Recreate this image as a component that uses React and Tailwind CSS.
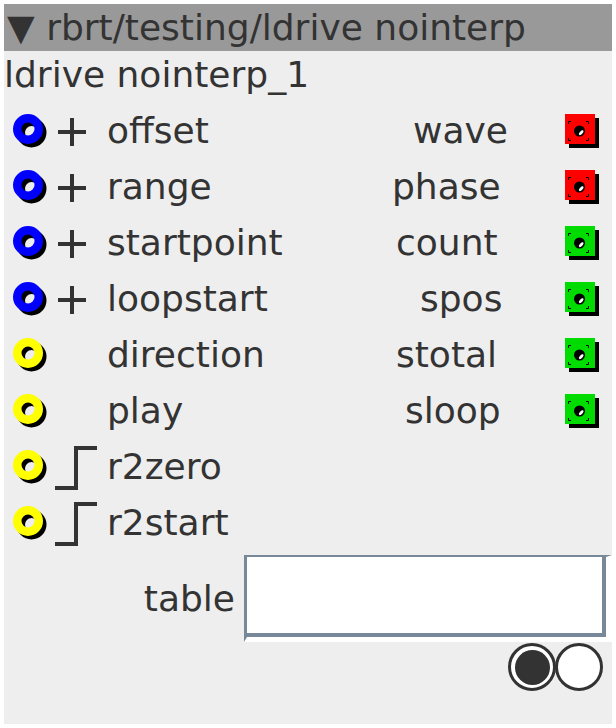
import React from "react";

const GREEN = "#00dc00";
const RED = "#ff0000";
const BLUE = "#0000ff";
const YELLOW = "#ffff00";

function Ring({ color }) {
  return (
    <svg width="36" height="36" viewBox="0 0 36 36" className="shrink-0 mt-[4px]">
      <circle cx="18.5" cy="18.5" r="10.75" fill="none" stroke="#000" strokeWidth="8.5" />
      <circle cx="15" cy="15" r="10.75" fill="none" stroke={color} strokeWidth="8.5" />
    </svg>
  );
}

function Slot({ kind }) {
  return (
    <svg width="44" height="48" viewBox="0 0 44 48" className="shrink-0 mt-[4px]">
      {kind === "plus" && (
        <g stroke="#333" strokeWidth="4">
          <line x1="4" y1="24" x2="32" y2="24" />
          <line x1="18" y1="10" x2="18" y2="38" />
        </g>
      )}
      {kind === "step" && (
        <polyline
          points="1,44 22,44 22,4 43,4"
          fill="none"
          stroke="#333"
          strokeWidth="4"
          strokeLinejoin="miter"
        />
      )}
    </svg>
  );
}

function Square({ color }) {
  return (
    <svg width="34" height="34" viewBox="0 0 34 34" className="shrink-0 mt-[2px]">
      <rect x="4" y="4" width="30" height="30" fill="#000" />
      <rect x="0" y="0" width="30" height="30" fill={color} />
      <g stroke="#000" strokeWidth="1" fill="none">
        <polyline points="3.5,10 3.5,7.5 6,7.5" />
        <polyline points="21,7.5 23.5,7.5 23.5,10" />
        <polyline points="3.5,24 3.5,26.5 6,26.5" />
        <polyline points="21,26.5 23.5,26.5 23.5,24" />
      </g>
      <circle cx="14.5" cy="17" r="5.5" fill="#000" />
      <ellipse cx="16.2" cy="18.7" rx="3" ry="1.5" fill="#fff" transform="rotate(-45 16.2 18.7)" />
    </svg>
  );
}

const rows = [
  { c: BLUE, kind: "plus", label: "offset", r: "wave", rc: RED, ml: "ml-[21px]" },
  { c: BLUE, kind: "plus", label: "range", r: "phase", rc: RED, ml: "ml-[0px]" },
  { c: BLUE, kind: "plus", label: "startpoint", r: "count", rc: GREEN, ml: "ml-[4px]" },
  { c: BLUE, kind: "plus", label: "loopstart", r: "spos", rc: GREEN, ml: "ml-[28px]" },
  { c: YELLOW, kind: "none", label: "direction", r: "stotal", rc: GREEN, ml: "ml-[4px]" },
  { c: YELLOW, kind: "none", label: "play", r: "sloop", rc: GREEN, ml: "ml-[13px]" },
  { c: YELLOW, kind: "step", label: "r2zero" },
  { c: YELLOW, kind: "step", label: "r2start" },
];

export default function App() {
  return (
    <div
      className="w-[616px] h-[728px] bg-white p-[4px] text-[#333] text-[36px] leading-[normal]"
      style={{ fontFamily: '"DejaVu Sans", sans-serif' }}
    >
      <div className="w-[608px] h-[720px] bg-[#eeeeee] flex flex-col">
        <div className="h-[47px] bg-[#999999] flex items-center pl-[3px] whitespace-nowrap">
          ▼ rbrt/testing/ldrive nointerp
        </div>
        <div className="mt-[3px] pl-[0px] whitespace-nowrap">ldrive nointerp_1</div>
        <div className="mt-[7px] flex flex-col">
          {rows.map((row) => (
            <div key={row.label} className="h-[56px] flex items-center whitespace-nowrap">
              <div className="w-[388px] shrink-0 flex items-center pl-[9px]">
                <Ring color={row.c} />
                <div className="ml-[5px]">
                  <Slot kind={row.kind} />
                </div>
                <span className="ml-[9px]">{row.label}</span>
              </div>
              {row.r && (
                <>
                  <span className={row.ml}>{row.r}</span>
                  <div className="flex-1" />
                  <div className="pr-[13px] flex items-center">
                    <Square color={row.rc} />
                  </div>
                </>
              )}
            </div>
          ))}
        </div>
        <div className="mt-[5px] flex items-center justify-end">
          <span className="mr-[9px]">table</span>
          <div className="w-[368px] h-[87px] border-solid border-t-[2px] border-l-[3px] border-r-[6px] border-b-[5px] border-t-[#778899] border-l-[#778899] border-r-white border-b-white">
            <div className="h-full bg-white border-solid border-r-[4px] border-b-[4px] border-[#778899]" />
          </div>
        </div>
        <div className="flex justify-end pr-[9px] mt-[1px]">
          <div className="w-[48px] h-[48px] rounded-full border-[3px] border-solid border-[#333] bg-white flex items-center justify-center">
            <div className="w-[35px] h-[35px] rounded-full bg-[#333]" />
          </div>
          <div className="w-[48px] h-[48px] -ml-[1px] rounded-full border-[3px] border-solid border-[#333] bg-white" />
        </div>
      </div>
    </div>
  );
}
